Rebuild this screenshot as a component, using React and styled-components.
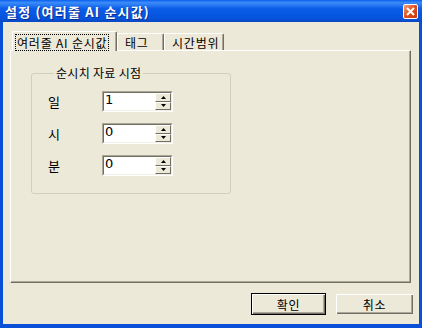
import React, { useState } from 'react';
import styled, { createGlobalStyle } from 'styled-components';

const Global = createGlobalStyle`
  html, body { margin: 0; padding: 0; background: #ECE9D8; }
  * { box-sizing: border-box; }
`;

const FONT = `"Noto Sans CJK KR", "Liberation Sans", sans-serif`;

// 창 전체 (파란 테두리)
const Window = styled.div`
  width: 422px;
  height: 328px;
  background: #0A4FD8;
  display: flex;
  flex-direction: column;
  font-family: ${FONT};
  font-size: 12px;
  color: #000;
  overflow: hidden;
`;

const TitleBar = styled.div`
  height: 22px;
  flex: none;
  display: flex;
  align-items: center;
  justify-content: space-between;
  padding: 0 4px 0 5px;
  background: linear-gradient(to bottom, #0A5FF0 0%, #3C8CF8 12%, #0A5CE8 40%, #0653DC 85%, #0A48C0 100%);
`;

const Title = styled.span`
  color: #fff;
  font-weight: bold;
  font-size: 13px;
  letter-spacing: 1.2px;
  text-shadow: 1px 1px 0 #0A2E90;
`;

const CloseBtn = styled.div`
  width: 15px;
  height: 15px;
  border: 1px solid #fff;
  border-radius: 2px;
  background: linear-gradient(135deg, #F0A080 0%, #E0501C 50%, #C83810 100%);
  display: flex;
  align-items: center;
  justify-content: center;
`;

const Client = styled.div`
  flex: 1;
  margin: 0 3px 4px 3px;
  background: #ECE9D8;
  display: flex;
  flex-direction: column;
  padding: 8px 8px 0 7px;
`;

const TabStrip = styled.div`
  display: flex;
  align-items: flex-end;
  height: 20px;
  padding-left: 4px;
  position: relative;
  z-index: 1;
`;

const Tab = styled.div`
  height: ${p => (p.$active ? '20px' : '17px')};
  margin: ${p => (p.$active ? '0 0 -1px -2px' : '0')};
  padding: ${p => (p.$active ? '1px 2px 0 3px' : '0 4px 0 7px')};
  background: #ECE9D8;
  border-top: 1px solid #fff;
  border-left: 1px solid #fff;
  border-right: 1px solid #716F64;
  border-top-left-radius: 2px;
  border-top-right-radius: 2px;
  box-shadow: inset -1px 0 0 #ACA899;
  display: flex;
  align-items: center;
  width: ${p => p.$w}px;
  letter-spacing: 0.8px;
  white-space: nowrap;
`;

const Focus = styled.span`
  outline: 1px dotted #000;
  outline-offset: 0;
  line-height: 15px;
  padding: 0 1px;
`;

const Panel = styled.div`
  height: 233px;
  background: #ECE9D8;
  border-top: 1px solid #fff;
  border-left: 1px solid #fff;
  border-right: 1px solid #716F64;
  border-bottom: 1px solid #716F64;
  box-shadow: inset -1px -1px 0 #ACA899;
  padding: 15px 0 0 20px;
`;

const Group = styled.fieldset`
  width: 200px;
  height: 128px;
  margin: 0;
  padding: 11px 0 0 16px;
  border: 1px solid #D0D0BF;
  border-radius: 3px;
`;

const Legend = styled.legend`
  padding: 0 2px;
  margin-left: 6px;
  font-size: 12px;
  line-height: 14px;
  letter-spacing: 0.3px;
`;

const Rows = styled.div`
  display: flex;
  flex-direction: column;
  gap: 11px;
`;

const Row = styled.div`
  display: flex;
  align-items: center;
  height: 21px;
`;

const Label = styled.span`
  width: 54px;
  font-size: 13px;
`;

const Spin = styled.div`
  width: 71px;
  height: 21px;
  display: flex;
  background: #fff;
  border-top: 1px solid #ACA899;
  border-left: 1px solid #ACA899;
  border-right: 1px solid #fff;
  border-bottom: 1px solid #fff;
`;

const SpinInner = styled.div`
  flex: 1;
  display: flex;
  border-top: 1px solid #716F64;
  border-left: 1px solid #716F64;
  border-right: 1px solid #F1EFE2;
  border-bottom: 1px solid #F1EFE2;
`;

const SpinValue = styled.div`
  flex: 1;
  font-family: "DejaVu Sans", "Liberation Sans", sans-serif;
  font-size: 13px;
  line-height: 14px;
  padding-left: 1px;
`;

const Arrows = styled.div`
  width: 16px;
  display: flex;
  flex-direction: column;
`;

const ArrowBtn = styled.div`
  flex: 1;
  background: #ECE9D8;
  border-top: 1px solid #fff;
  border-left: 1px solid #fff;
  border-right: 1px solid #716F64;
  border-bottom: 1px solid #716F64;
  display: flex;
  align-items: center;
  justify-content: center;
`;

const Footer = styled.div`
  display: flex;
  justify-content: flex-end;
  gap: 9px;
  padding: 10px 0 0 0;
  margin-right: -3px;
`;

const Button = styled.div`
  width: ${p => p.$w}px;
  height: 22px;
  background: #ECE9D8;
  border: 1px solid ${p => (p.$default ? '#000' : '#ECE9D8')};
  box-shadow: inset 1px 1px 0 #fff, inset -1px -1px 0 #716F64, inset -2px -2px 0 #ACA899;
  display: flex;
  align-items: center;
  justify-content: center;
  font-size: 12px;
  letter-spacing: 0.8px;
`;

const Arrow = ({ up }) => (
  <svg width="5" height="3" viewBox="0 0 5 3">
    <path d={up ? 'M2.5 0 L5 3 L0 3 Z' : 'M0 0 L5 0 L2.5 3 Z'} fill="#000" />
  </svg>
);

const SpinBox = ({ value }) => (
  <Spin>
    <SpinInner>
      <SpinValue>{value}</SpinValue>
      <Arrows>
        <ArrowBtn><Arrow up /></ArrowBtn>
        <ArrowBtn><Arrow /></ArrowBtn>
      </Arrows>
    </SpinInner>
  </Spin>
);

const App = () => {
  const [fields] = useState([
    { label: '일', value: '1' },
    { label: '시', value: '0' },
    { label: '분', value: '0' },
  ]);

  return (
    <>
      <Global />
      <Window>
        <TitleBar>
          <Title>설정 (여러줄 AI 순시값)</Title>
          <CloseBtn>
            <svg width="9" height="9" viewBox="0 0 9 9">
              <path d="M1 1 L8 8 M8 1 L1 8" stroke="#fff" strokeWidth="2" />
            </svg>
          </CloseBtn>
        </TitleBar>
        <Client>
          <TabStrip>
            <Tab $active $w={105}><Focus>여러줄 AI 순시값</Focus></Tab>
            <Tab $w={47}>태그</Tab>
            <Tab $w={60}>시간범위</Tab>
          </TabStrip>
          <Panel>
            <Group>
              <Legend>순시치 자료 시점</Legend>
              <Rows>
                {fields.map(f => (
                  <Row key={f.label}>
                    <Label>{f.label}</Label>
                    <SpinBox value={f.value} />
                  </Row>
                ))}
              </Rows>
            </Group>
          </Panel>
          <Footer>
            <Button $default $w={75}>확인</Button>
            <Button $w={79}>취소</Button>
          </Footer>
        </Client>
      </Window>
    </>
  );
};

export default App;
